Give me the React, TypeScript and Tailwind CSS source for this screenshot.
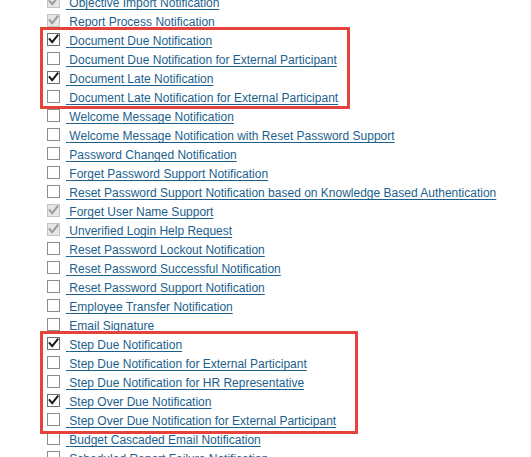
import React from "react";

type Row = { label: string; state: "off" | "on" | "dis" };

const rows: Row[] = [
  { label: "Objective Import Notification", state: "dis" },
  { label: "Report Process Notification", state: "dis" },
  { label: "Document Due Notification", state: "on" },
  { label: "Document Due Notification for External Participant", state: "off" },
  { label: "Document Late Notification", state: "on" },
  { label: "Document Late Notification for External Participant", state: "off" },
  { label: "Welcome Message Notification", state: "off" },
  { label: "Welcome Message Notification with Reset Password Support", state: "off" },
  { label: "Password Changed Notification", state: "off" },
  { label: "Forget Password Support Notification", state: "off" },
  { label: "Reset Password Support Notification based on Knowledge Based Authentication", state: "off" },
  { label: "Forget User Name Support", state: "dis" },
  { label: "Unverified Login Help Request", state: "dis" },
  { label: "Reset Password Lockout Notification", state: "off" },
  { label: "Reset Password Successful Notification", state: "off" },
  { label: "Reset Password Support Notification", state: "off" },
  { label: "Employee Transfer Notification", state: "off" },
  { label: "Email Signature", state: "off" },
  { label: "Step Due Notification", state: "on" },
  { label: "Step Due Notification for External Participant", state: "off" },
  { label: "Step Due Notification for HR Representative", state: "off" },
  { label: "Step Over Due Notification", state: "on" },
  { label: "Step Over Due Notification for External Participant", state: "off" },
  { label: "Budget Cascaded Email Notification", state: "off" },
  { label: "Scheduled Report Failure Notification", state: "off" },
];

function Box({ state }: { state: Row["state"] }) {
  if (state === "off") {
    return <div className="w-[13px] h-[13px] shrink-0 border border-[#8c8c8c] bg-white" />;
  }
  const dis = state === "dis";
  return (
    <div
      className={
        dis
          ? "w-[13px] h-[13px] shrink-0 border border-[#c4c4c4] bg-[#e6e6e6] flex items-center justify-center"
          : "w-[13px] h-[13px] shrink-0 border border-[#6e6e6e] bg-white flex items-center justify-center"
      }
    >
      <svg width="11" height="11" viewBox="0 0 11 11">
        <path
          d="M1.6 5.2 L4.2 8.2 L9.6 1.4"
          fill="none"
          stroke={dis ? "#9a9a9a" : "#1a1a1a"}
          strokeWidth="2"
          strokeLinecap="square"
        />
      </svg>
    </div>
  );
}

export default function App() {
  return (
    <div
      className="relative w-[531px] h-[457px] overflow-hidden bg-white"
      style={{ fontFamily: '"Liberation Sans", Arial, sans-serif' }}
    >
      <div className="flex flex-col mt-[-8px] pl-[47px]">
        {rows.map((r) => (
          <div key={r.label} className="h-[19px] flex items-start pt-[3px]">
            <Box state={r.state} />
            <a
              href="#"
              className="ml-[6px] mt-[1px] text-[12px] leading-[14px] text-[#1c5f8e] underline underline-offset-[2px] decoration-[1px] whitespace-nowrap"
            >
              {"\u00a0"}
              {r.label}
            </a>
          </div>
        ))}
      </div>
      <div className="absolute left-[40px] top-[27px] w-[310px] h-[82px] border-[3px] border-[#e5413d]" />
      <div className="absolute left-[40px] top-[331px] w-[318px] h-[103px] border-[3px] border-[#e5413d]" />
    </div>
  );
}
